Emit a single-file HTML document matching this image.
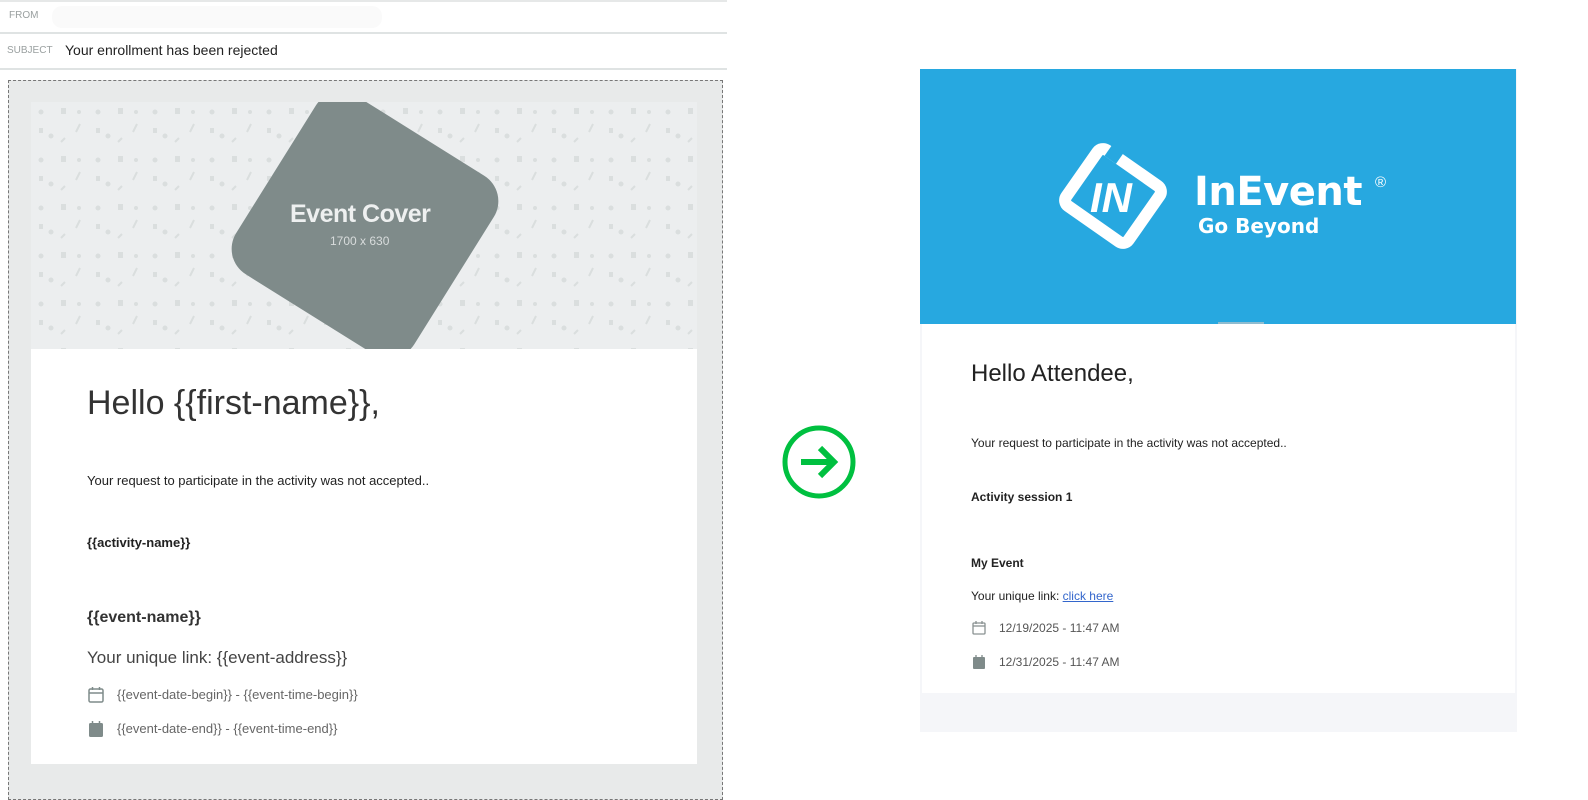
<!DOCTYPE html>
<html><head><meta charset="utf-8"><style>
*{margin:0;padding:0;box-sizing:border-box}
body{width:1588px;height:786px;background:#fff;position:relative;overflow:hidden;font-family:"Liberation Sans",Arial,sans-serif}
.a{position:absolute;white-space:nowrap}
</style></head><body>
<!-- left header -->
<div class="a" style="left:0;top:0;width:727px;height:34px;background:#fff;border-bottom:2px solid #dfe3e3"></div>
<div class="a" style="left:0;top:0;width:727px;height:2px;background:#e6e8e8"></div>
<div class="a" style="left:9px;top:10px;font-size:10px;color:#9aa0a0">FROM</div>
<div class="a" style="left:52px;top:6px;width:330px;height:22px;background:#fafafa;border-radius:10px"></div>
<div class="a" style="left:0;top:35px;width:727px;height:35px;border-bottom:2px solid #dfe3e3"></div>
<div class="a" style="left:7px;top:45px;font-size:10px;color:#9aa0a0">SUBJECT</div>
<div class="a" style="left:65px;top:42px;font-size:14px;color:#222">Your enrollment has been rejected</div>
<!-- dashed container -->
<div class="a" style="left:8px;top:80px;width:715px;height:720px;border:1px dashed #777;background:#e8eaea"></div>
<!-- cover -->
<div class="a" style="left:31px;top:102px;width:666px;height:247px;background:#eceeef;overflow:hidden">
<svg width="666" height="247" style="position:absolute;left:0;top:0">
<defs><pattern id="p" width="57" height="48" patternUnits="userSpaceOnUse">
<circle cx="10" cy="10" r="2.5" fill="#dadede"/><rect x="30" y="6" width="5" height="6" fill="#dadede"/><path d="M45 30l4-8" stroke="#dadede" stroke-width="2"/><circle cx="20" cy="34" r="2.5" fill="#dadede"/><rect x="8" y="26" width="4" height="5" fill="#dadede"/><circle cx="48" cy="10" r="2" fill="#dadede"/><path d="M30 40l4-4" stroke="#dadede" stroke-width="2"/>
</pattern></defs>
<rect width="666" height="247" fill="url(#p)"/>
<rect x="-105" y="-105" width="210" height="210" rx="30" fill="#7f8b8a" transform="translate(334 123) rotate(32)"/>
</svg>
<div class="a" style="left:259px;top:98px;font-size:25px;font-weight:bold;color:#eef0f0;letter-spacing:-0.5px">Event Cover</div>
<div class="a" style="left:299px;top:132px;font-size:12px;color:#d8dcdc">1700 x 630</div>
</div>
<!-- white body -->
<div class="a" style="left:31px;top:349px;width:666px;height:415px;background:#fff"></div>
<div class="a" style="left:87px;top:384px;font-size:34px;color:#333">Hello {{first-name}},</div>
<div class="a" style="left:87px;top:473px;font-size:13px;color:#222">Your request to participate in the activity was not accepted..</div>
<div class="a" style="left:87px;top:535px;font-size:13px;font-weight:bold;color:#222">{{activity-name}}</div>
<div class="a" style="left:87px;top:609px;font-size:16px;font-weight:bold;color:#333">{{event-name}}</div>
<div class="a" style="left:87px;top:648px;font-size:17px;color:#444">Your unique link: {{event-address}}</div>
<svg class="a" style="left:88px;top:686px" width="16" height="18"><rect x="1" y="3" width="14" height="13" rx="1.5" fill="none" stroke="#7f8b8a" stroke-width="1.5"/><line x1="1" y1="7" x2="15" y2="7" stroke="#7f8b8a" stroke-width="1.5"/><line x1="4.5" y1="1" x2="4.5" y2="4" stroke="#7f8b8a" stroke-width="1.5"/><line x1="11.5" y1="1" x2="11.5" y2="4" stroke="#7f8b8a" stroke-width="1.5"/></svg>
<div class="a" style="left:117px;top:687px;font-size:13px;color:#666">{{event-date-begin}} - {{event-time-begin}}</div>
<svg class="a" style="left:88px;top:720px" width="16" height="18"><rect x="1" y="3" width="14" height="14" rx="1.5" fill="#7f8b8a"/><line x1="4.5" y1="1" x2="4.5" y2="4" stroke="#7f8b8a" stroke-width="1.5"/><line x1="11.5" y1="1" x2="11.5" y2="4" stroke="#7f8b8a" stroke-width="1.5"/></svg>
<div class="a" style="left:117px;top:721px;font-size:13px;color:#666">{{event-date-end}} - {{event-time-end}}</div>
<!-- arrow -->
<svg class="a" style="left:780px;top:420px" width="80" height="80"><circle cx="39" cy="42" r="34" fill="none" stroke="#00c040" stroke-width="5"/><path d="M21 42h30" stroke="#00c040" stroke-width="6"/><path d="M40 28l14 14-14 14" fill="none" stroke="#00c040" stroke-width="6"/></svg>
<!-- right panel -->
<div class="a" style="left:920px;top:69px;width:597px;height:663px;background:#f5f6f9"></div>
<div class="a" style="left:920px;top:69px;width:596px;height:255px;background:#27a8e0"></div>
<div class="a" style="left:1218px;top:322px;width:46px;height:3px;background:#8fbcd0"></div>
<div class="a" style="left:922px;top:324px;width:593px;height:369px;background:#fff"></div>
<!-- logo -->
<svg class="a" style="left:1050px;top:138px" width="130" height="116">
<g transform="translate(63 58) rotate(35)">
<rect x="-38" y="-34" width="76" height="68" rx="7" fill="none" stroke="#fff" stroke-width="12"/>
<rect x="-30" y="-42" width="14" height="14" fill="#27a8e0"/>
<text x="-2" y="16" text-anchor="middle" font-family="Liberation Sans" font-weight="bold" font-style="italic" font-size="42" fill="#fff" transform="rotate(-35)">IN</text>
</g>
</svg>
<div class="a" style="left:1194px;top:168px;font-size:40px;font-weight:bold;color:#fff;font-family:'DejaVu Sans',sans-serif;letter-spacing:-0.5px;line-height:48px">InEvent</div>
<div class="a" style="left:1375px;top:174px;font-size:15px;color:#fff">®</div>
<div class="a" style="left:1198px;top:214px;font-size:20px;font-weight:bold;color:#fff;font-family:'DejaVu Sans',sans-serif">Go Beyond</div>
<div class="a" style="left:971px;top:360px;font-size:24px;color:#222">Hello Attendee,</div>
<div class="a" style="left:971px;top:436px;font-size:12px;color:#222">Your request to participate in the activity was not accepted..</div>
<div class="a" style="left:971px;top:490px;font-size:12px;font-weight:bold;color:#222">Activity session 1</div>
<div class="a" style="left:971px;top:556px;font-size:12px;font-weight:bold;color:#222">My Event</div>
<div class="a" style="left:971px;top:589px;font-size:12px;color:#222">Your unique link: <span style="color:#3366cc;text-decoration:underline">click here</span></div>
<svg class="a" style="left:972px;top:620px" width="14" height="16"><rect x="1" y="3" width="12" height="11" rx="1" fill="none" stroke="#8a9292" stroke-width="1.3"/><line x1="1" y1="6" x2="13" y2="6" stroke="#8a9292" stroke-width="1.3"/><line x1="4" y1="1" x2="4" y2="4" stroke="#8a9292" stroke-width="1.3"/><line x1="10" y1="1" x2="10" y2="4" stroke="#8a9292" stroke-width="1.3"/></svg>
<div class="a" style="left:999px;top:621px;font-size:12px;color:#555">12/19/2025 - 11:47 AM</div>
<svg class="a" style="left:972px;top:654px" width="14" height="16"><rect x="1" y="3" width="12" height="12" rx="1" fill="#7f8b8a"/><line x1="4" y1="1" x2="4" y2="4" stroke="#7f8b8a" stroke-width="1.3"/><line x1="10" y1="1" x2="10" y2="4" stroke="#7f8b8a" stroke-width="1.3"/></svg>
<div class="a" style="left:999px;top:655px;font-size:12px;color:#555">12/31/2025 - 11:47 AM</div>
</body></html>
